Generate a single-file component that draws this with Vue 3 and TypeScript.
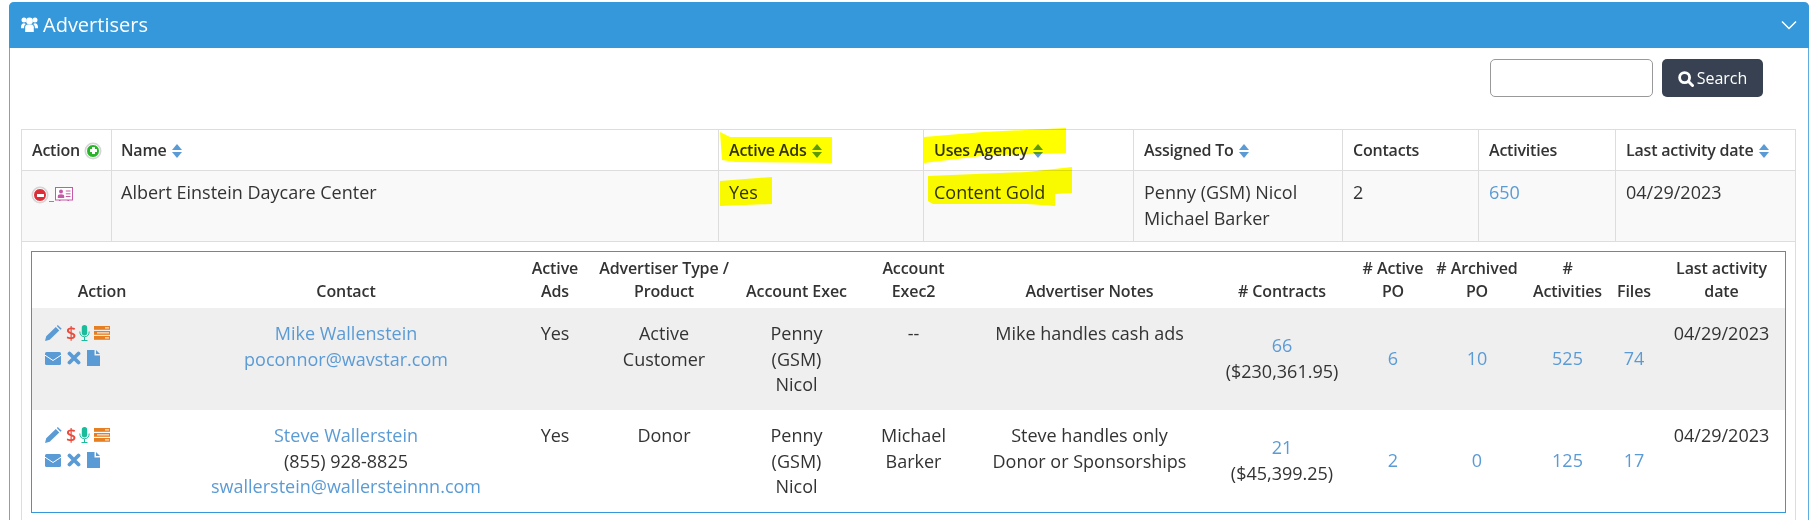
<script setup lang="ts">
interface Col { label: string; sort?: boolean; cls: string }
const outerCols: Col[] = [
  { label: 'Name', sort: true, cls: 'c-name' },
  { label: 'Active Ads', sort: true, cls: 'c-ads' },
  { label: 'Uses Agency', sort: true, cls: 'c-agency' },
  { label: 'Assigned To', sort: true, cls: 'c-assigned' },
  { label: 'Contacts', cls: 'c-contacts' },
  { label: 'Activities', cls: 'c-act' },
  { label: 'Last activity date', sort: true, cls: 'c-last' },
]
const innerHead = [
  'Action', 'Contact', 'Active Ads', 'Advertiser Type / Product', 'Account Exec', 'Account Exec2',
  'Advertiser Notes', '# Contracts', '# Active PO', '# Archived PO', '# Activities', 'Files', 'Last activity date',
]
const contacts = [
  {
    name: 'Mike Wallenstein', phone: '', email: 'poconnor@wavstar.com', ads: 'Yes', type: 'Active Customer',
    exec2: '--', notes: 'Mike handles cash ads', contracts: '66', amount: '($230,361.95)', po: '6', arch: '10',
    act: '525', files: '74', date: '04/29/2023',
  },
  {
    name: 'Steve Wallerstein', phone: '(855) 928-8825', email: 'swallerstein@wallersteinnn.com', ads: 'Yes', type: 'Donor',
    exec2: 'Michael Barker', notes: 'Steve handles only\nDonor or Sponsorships', contracts: '21', amount: '($45,399.25)', po: '2', arch: '0',
    act: '125', files: '17', date: '04/29/2023',
  },
]
const strokes = [
  '720,132 730,137 832,137 832,163 735,162 722,160',
  '924,137 983,132 1066,128 1066,153 1040,154 990,155 924,163',
  '720,181 772,177 772,204 720,206',
  '928,176 1027,172 1072,167 1072,193 1055,194 1055,206 1027,204 933,204 928,201',
]
</script>

<template>
  <div class="page">
    <section class="panel">
      <header class="panel-head">
        <div class="title">
          <svg class="users" viewBox="0 0 17 15" width="17" height="15"><circle cx="8.500" cy="4" r="3.400" fill="#fff"/><circle cx="3" cy="3" r="2.500" fill="#fff"/><circle cx="14" cy="3" r="2.500" fill="#fff"/><path d="M4.200 15V10.300C4.200 8.500 5.400 7.600 6.500 7.600h4c1.100 0 2.300.9 2.300 2.700V15z" fill="#fff"/><path d="M0 10.300C0 7.600 1.300 6.300 3 6.300c.7 0 1.300.2 1.800.6-1.100.8-1.700 2-1.700 3.600v.8H0zM17 10.300c0-2.700-1.300-4-3-4-.7 0-1.300.2-1.800.6 1.100.8 1.700 2 1.700 3.600v.8H17z" fill="#fff"/></svg>
          <span>Advertisers</span>
        </div>
        <svg class="chev" viewBox="0 0 16 10" width="16" height="10"><path d="M1 1.500l7 7 7-7" fill="none" stroke="#fff" stroke-width="1.500"/></svg>
      </header>
      <div class="panel-body">
        <div class="search">
          <input class="search-input" type="text" />
          <button class="search-btn" type="button">
            <svg viewBox="0 0 16 16" width="16" height="16"><circle cx="6.600" cy="6.600" r="5" fill="none" stroke="#fff" stroke-width="2.800"/><path d="M10.500 10.500l4 4" stroke="#fff" stroke-width="3" stroke-linecap="round"/></svg>
            Search
          </button>
        </div>

        <div class="outer">
          <div class="outer-row outer-head">
            <div class="cell c-action">
              Action
              <span class="round green"><span class="bar-h"></span><span class="bar-v"></span></span>
            </div>
            <div v-for="c in outerCols" :key="c.label" class="cell" :class="c.cls">
              <span>{{ c.label }}</span>
              <span v-if="c.sort" class="sort"><i class="up"></i><i class="down"></i></span>
            </div>
          </div>
          <div class="outer-row outer-data">
            <div class="cell c-action icons-line">
              <span class="round red"><span class="bar-h"></span></span>
              <span class="under"></span>
              <svg class="card" viewBox="0 0 18 14" width="18" height="14"><rect x=".5" y=".5" width="17" height="12.500" fill="#fff" stroke="#c75aa6" stroke-width="1"/><circle cx="6" cy="4.500" r="2" fill="#c75aa6"/><path d="M2.800 11V9c0-1 1-1.800 3.200-1.800S9.200 8 9.200 9v2z" fill="#c75aa6"/><path d="M10.800 4h4.700M10.800 6.800h4.700M10.800 9.500h4.700" stroke="#c75aa6" stroke-width="1"/><path d="M4 13.500h1.500M12.500 13.500H14" stroke="#c75aa6" stroke-width="1"/></svg>
            </div>
            <div class="cell c-name">Albert Einstein Daycare Center</div>
            <div class="cell c-ads">Yes</div>
            <div class="cell c-agency">Content Gold</div>
            <div class="cell c-assigned">Penny (GSM) Nicol<br />Michael Barker</div>
            <div class="cell c-contacts">2</div>
            <div class="cell c-act"><a>650</a></div>
            <div class="cell c-last">04/29/2023</div>
          </div>

          <div class="detail-wrap">
            <div class="detail">
              <div class="d-row d-head">
                <div v-for="h in innerHead" :key="h" class="d-cell">{{ h }}</div>
              </div>
              <div v-for="(p, i) in contacts" :key="p.name" class="d-row d-body" :class="{ shade: i === 0 }">
                <div class="d-cell d-icons">
                  <div class="icon-line">
                    <svg class="i-pen" viewBox="0 0 17 16" width="17" height="16"><path d="M0 16l1.200-4.700L10.800 1.900l3.500 3.500-9.600 9.400zM11.800 1l1-1 3.900 3.700-1.300 1z" fill="#5b9bd5"/></svg>
                    <span class="dollar">$</span>
                    <svg class="i-mic" viewBox="0 0 11 16" width="11" height="16"><rect x="2.800" y="0" width="5.400" height="10.500" rx="2.700" fill="#1abc9c"/><path d="M.8 6.500c0 3.400 2 5.300 4.700 5.300s4.700-1.900 4.700-5.300M5.500 12v3M2.500 15.500h6" fill="none" stroke="#1abc9c" stroke-width="1"/></svg>
                    <svg class="i-srv" viewBox="0 0 16 14" width="16" height="14"><rect y="0" width="16" height="3.800" fill="#e67e22"/><rect y="5" width="16" height="3.800" fill="#e67e22"/><rect y="10" width="16" height="3.800" fill="#e67e22"/><path d="M11 1.900h4M3 6.900h12M11 11.900h4" stroke="#fff" stroke-width="1"/></svg>
                  </div>
                  <div class="icon-line second">
                    <svg class="i-mail" viewBox="0 0 16 13" width="16" height="13"><rect width="16" height="13" rx="1.500" fill="#5b9bd5"/><path d="M0 3.200l8 5.300 8-5.300" fill="none" stroke="#fff" stroke-width="1"/></svg>
                    <svg class="i-x" viewBox="0 0 14 14" width="14" height="14"><path d="M2.500 2.500l9 9M11.500 2.500l-9 9" stroke="#5b9bd5" stroke-width="3.800" stroke-linecap="round"/></svg>
                    <svg class="i-doc" viewBox="0 0 13 16" width="13" height="16"><path d="M0 0h7.500v5.500H13V16H0z" fill="#5b9bd5"/><path d="M9 0l4 4H9z" fill="#5b9bd5"/></svg>
                  </div>
                </div>
                <div class="d-cell">
                  <a class="block">{{ p.name }}</a>
                  <div v-if="p.phone">{{ p.phone }}</div>
                  <a class="block">{{ p.email }}</a>
                </div>
                <div class="d-cell">{{ p.ads }}</div>
                <div class="d-cell">{{ p.type }}</div>
                <div class="d-cell exec">Penny (GSM) Nicol</div>
                <div class="d-cell">{{ p.exec2 }}</div>
                <div class="d-cell notes">{{ p.notes }}</div>
                <div class="d-cell mid"><a class="block">{{ p.contracts }}</a><div>{{ p.amount }}</div></div>
                <div class="d-cell mid"><a>{{ p.po }}</a></div>
                <div class="d-cell mid"><a>{{ p.arch }}</a></div>
                <div class="d-cell mid"><a>{{ p.act }}</a></div>
                <div class="d-cell mid"><a>{{ p.files }}</a></div>
                <div class="d-cell narrow">{{ p.date }}</div>
              </div>
            </div>
          </div>
        </div>
      </div>
    </section>
    <svg class="marker" viewBox="0 0 1815 520" width="1815" height="520" aria-hidden="true">
      <polygon v-for="s in strokes" :key="s" :points="s" fill="#ffff00" />
    </svg>
  </div>
</template>

<style>
html, body { margin: 0; background: #fff; }
</style>

<style scoped>
.page { position: relative; padding: 2px 6px 0 9px; height: 518px; overflow: hidden; font-family: "Open Sans", sans-serif; font-size: 18px; line-height: 25.7px; color: #333; }
.marker { position: absolute; left: 0; top: 0; mix-blend-mode: multiply; pointer-events: none; }
.panel { border: 1px solid #5dade2; border-top: 0; border-radius: 5px 5px 0 0; height: 600px; box-sizing: border-box; }
.panel-head { height: 46px; margin: 0 -1px; background: #3498db; border-radius: 5px 5px 0 0; display: flex; align-items: center; justify-content: space-between; padding: 0 12px 0 12px; color: #fff; font-size: 20px; }
.title { display: flex; align-items: center; gap: 5px; }
.users, .chev { display: block; }
.panel-body { padding: 11px 12px 0 11px; }
.search { display: flex; justify-content: flex-end; gap: 9px; padding-right: 33px; height: 38px; margin-bottom: 32px; }
.search-input { width: 163px; box-sizing: border-box; border: 1px solid #999; border-radius: 5px; background: #fff; }
.search-btn { width: 101px; border: 0; border-radius: 5px; background: #374151; color: #fff; font: inherit; font-size: 16px; display: flex; align-items: center; justify-content: center; gap: 3px; padding: 2px 0 0; }
.outer { border: 1px solid #ddd; height: 480px; box-sizing: border-box; }
.outer-row { display: flex; }
.outer-head { height: 40px; font-weight: 600; font-size: 16px; letter-spacing: -.2px; border-bottom: 1px solid #ddd; }
.outer-data { height: 70px; background: #f9f9f9; border-bottom: 1px solid #ddd; }
.cell { box-sizing: border-box; padding: 9px 10px; border-left: 1px solid #ddd; }
.outer-head .cell { display: flex; align-items: center; gap: 5px; padding-top: 1px; padding-bottom: 0; }
.c-action { width: 89px; border-left: 0; }
.c-name { width: 607px; padding-left: 9px; }
.c-ads { width: 205px; }
.c-agency { width: 210px; }
.c-assigned { width: 209px; }
.c-contacts { width: 136px; }
.c-act { width: 137px; }
.c-last { width: 180px; }
.outer-head .c-action { gap: 6px; }
.sort { display: inline-flex; flex-direction: column; gap: 2px; }
.sort i { display: block; width: 0; height: 0; border-left: 5px solid transparent; border-right: 5px solid transparent; }
.sort .up { border-bottom: 6px solid #5b9bd5; }
.sort .down { border-top: 6px solid #5b9bd5; }
.round { position: relative; display: inline-block; flex: none; width: 12px; height: 12px; border-radius: 50%; border: 1px solid #fff; box-shadow: 0 0 0 1.500px #d5d5d5; }
.round.green { background: #28b428; }
.round.red { background: #dc2e38; }
.bar-h, .bar-v { position: absolute; background: #fff; }
.bar-h { left: 2.500px; right: 2.500px; top: 4.500px; height: 3px; }
.bar-v { top: 2.500px; bottom: 2.500px; left: 4.500px; width: 3px; }
.icons-line { display: flex; align-items: flex-start; padding-left: 11px; padding-top: 17px; }
.under { width: 5px; height: 1px; margin: 13px 0 0 2px; background: #5b9bd5; flex: none; }
.card { display: block; margin: -1px 0 0 1px; }
a { color: #5b9bd5; }
a.block { display: block; }
.detail-wrap { padding: 9px 9px 0; }
.detail { border: 1px solid #3498db; }
.d-row { display: grid; grid-template-columns: 140px 348px 70px 148px 117px 117px 235px 150px 72px 96px 85px 48px 1fr; text-align: center; }
.d-head { height: 56px; font-size: 16px; line-height: 23px; font-weight: 600; letter-spacing: -.1px; align-items: end; padding-bottom: 5px; box-sizing: border-box; }
.d-head .d-cell { padding: 0 3px; }
.d-head .d-cell:nth-child(6) { padding: 0 12px; }
.d-body { height: 102px; box-sizing: border-box; padding-top: 13px; }
.d-body.shade { background: #efefef; }
.d-cell { padding: 0 8px; box-sizing: border-box; }
.exec { padding: 0 14px; }
.notes { white-space: pre-line; }
.narrow { padding: 0; }
.mid { align-self: center; margin-top: -13px; padding: 0; }
.d-icons { text-align: left; padding: 4px 0 0 13px; }
.icon-line { display: flex; align-items: center; height: 16px; }
.icon-line svg { display: block; flex: none; }
.icon-line.second { margin-top: 9px; }
.dollar { width: 9px; margin: 0 4px; text-align: center; color: #e84c3d; font-weight: 600; font-size: 18px; line-height: 16px; }
.i-srv { margin-left: 4px; }
.i-x { margin-left: 6px; }
.i-doc { margin-left: 6px; }
</style>
